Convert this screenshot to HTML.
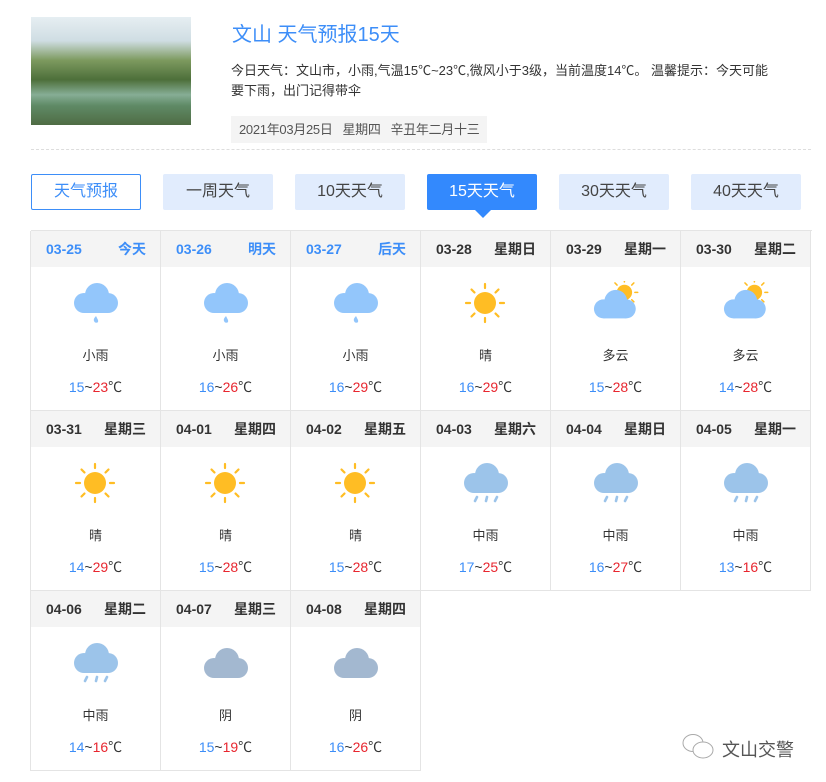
<!DOCTYPE html>
<html><head><meta charset="utf-8"><style>
*{margin:0;padding:0;box-sizing:border-box}
body{width:826px;height:782px;background:#fff;font-family:"Liberation Sans","Noto Sans CJK SC",sans-serif;color:#333;position:relative;overflow:hidden}
.abs{position:absolute}
.img{left:31px;top:17px;width:160px;height:108px;background:linear-gradient(180deg,#e6eef2 0%,#cfdde3 22%,#7d9a5f 40%,#4d6f3a 58%,#86ad95 72%,#5f8a66 82%,#4f6c44 100%)}
.title{left:232px;top:18px;font-size:20px;color:#3d8ef8}
.desc{left:231px;top:61px;width:590px;font-size:13px;line-height:20px;color:#333;white-space:nowrap}
.date{left:231px;top:116px;height:27px;background:#f4f4f4;font-size:13px;line-height:27px;padding:0 8px;color:#555;white-space:nowrap;letter-spacing:-0.3px}
.dash{left:31px;top:149px;width:780px;border-top:1px dashed #ddd}
.tab{top:174px;width:110px;height:36px;background:#e1ecfd;border-radius:2px;text-align:center;line-height:36px;font-size:16px;color:#444}
.tab.first{background:#fff;border:1px solid #3d8ef8;color:#3d8ef8;line-height:34px}
.tab.act{background:#3389fd;color:#fff}
.tri{left:475px;top:210px;width:0;height:0;border-left:8px solid transparent;border-right:8px solid transparent;border-top:8px solid #3389fd}
.row{display:flex}
.cell{width:130px;height:180px;border-right:1px solid #e4e4e4;border-bottom:1px solid #e4e4e4;flex:none}
.cell.l{border-left:1px solid #e4e4e4;width:131px;margin-left:-1px}
.cell .h{height:36px;background:#f4f4f4;font-size:14px;font-weight:bold;line-height:36px;padding:0 14px 0 15px;display:flex;justify-content:space-between;color:#333}
.cell .h.b{color:#3d8ef8}
.cell svg{display:block;margin:14px auto 0}
.w{text-align:center;font-size:13px;margin-top:18px}
.t{text-align:center;font-size:14px;margin-top:13px}
.lo{color:#3d8ef8}.hi{color:#e8262f}
.wm{left:722px;top:736px;font-size:18px;color:#555}
</style></head><body>
<div class="abs img"></div>
<div class="abs title">文山 天气预报15天</div>
<div class="abs desc">今日天气：文山市，小雨,气温15℃~23℃,微风小于3级，当前温度14℃。 温馨提示：今天可能<br>要下雨，出门记得带伞</div>
<div class="abs date">2021年03月25日&nbsp;&nbsp;&nbsp;星期四&nbsp;&nbsp;&nbsp;辛丑年二月十三</div>
<div class="abs dash"></div>
<div class="abs tab first" style="left:31px">天气预报</div>
<div class="abs tab" style="left:163px">一周天气</div>
<div class="abs tab" style="left:295px">10天天气</div>
<div class="abs tab act" style="left:427px">15天天气</div>
<div class="abs tab" style="left:559px">30天天气</div>
<div class="abs tab" style="left:691px">40天天气</div>
<div class="abs tri"></div>
<svg width="0" height="0" style="position:absolute"><defs>
<g id="cl"><circle cx="24" cy="14" r="12"/><circle cx="11" cy="22" r="10"/><circle cx="35" cy="22" r="10"/><rect x="11" y="18" width="24" height="14"/></g>
<g id="sun" fill="#ffbd24"><circle cx="22" cy="22" r="11"/><g stroke="#ffbd24" stroke-width="2.2" stroke-linecap="round"><line x1="22" y1="3" x2="22" y2="7"/><line x1="22" y1="37" x2="22" y2="41"/><line x1="3" y1="22" x2="7" y2="22"/><line x1="37" y1="22" x2="41" y2="22"/><line x1="8.5" y1="8.5" x2="11.5" y2="11.5"/><line x1="32.5" y1="32.5" x2="35.5" y2="35.5"/><line x1="35.5" y1="8.5" x2="32.5" y2="11.5"/><line x1="11.5" y1="32.5" x2="8.5" y2="35.5"/></g></g>
<g id="lr"><use href="#cl" fill="#93c6fb"/><path d="M23 35q-4 4-1 6.5q4 1 3-2.5q-1-2-2-4z" fill="#93c6fb"/></g>
<g id="mr"><use href="#cl" fill="#9cc4ea"/><g stroke="#9cc4ea" stroke-width="2.6" stroke-linecap="round"><line x1="14" y1="36" x2="12" y2="40"/><line x1="24" y1="36" x2="23" y2="40"/><line x1="34" y1="36" x2="32" y2="40"/></g></g>
<g id="pc"><g transform="translate(16,-4) scale(.7)"><use href="#sun"/></g><g transform="translate(0,7) scale(.95)"><use href="#cl" fill="#93c6fb"/></g></g>
</defs></svg>
<div class="abs" style="left:31px;top:230px;width:781px;border-top:1px solid #e4e4e4">
<div class="row">
<div class="cell l"><div class="h b"><span>03-25</span><span>今天</span></div><svg width="46" height="46" viewBox="0 0 46 46"><use href="#lr"/></svg><div class="w">小雨</div><div class="t"><span class="lo">15</span>~<span class="hi">23</span>℃</div></div>
<div class="cell"><div class="h b"><span>03-26</span><span>明天</span></div><svg width="46" height="46" viewBox="0 0 46 46"><use href="#lr"/></svg><div class="w">小雨</div><div class="t"><span class="lo">16</span>~<span class="hi">26</span>℃</div></div>
<div class="cell"><div class="h b"><span>03-27</span><span>后天</span></div><svg width="46" height="46" viewBox="0 0 46 46"><use href="#lr"/></svg><div class="w">小雨</div><div class="t"><span class="lo">16</span>~<span class="hi">29</span>℃</div></div>
<div class="cell"><div class="h"><span>03-28</span><span>星期日</span></div><svg width="46" height="46" viewBox="0 0 46 46"><use href="#sun"/></svg><div class="w">晴</div><div class="t"><span class="lo">16</span>~<span class="hi">29</span>℃</div></div>
<div class="cell"><div class="h"><span>03-29</span><span>星期一</span></div><svg width="46" height="46" viewBox="0 0 46 46"><use href="#pc"/></svg><div class="w">多云</div><div class="t"><span class="lo">15</span>~<span class="hi">28</span>℃</div></div>
<div class="cell"><div class="h"><span>03-30</span><span>星期二</span></div><svg width="46" height="46" viewBox="0 0 46 46"><use href="#pc"/></svg><div class="w">多云</div><div class="t"><span class="lo">14</span>~<span class="hi">28</span>℃</div></div>
</div>
<div class="row">
<div class="cell l"><div class="h"><span>03-31</span><span>星期三</span></div><svg width="46" height="46" viewBox="0 0 46 46"><use href="#sun"/></svg><div class="w">晴</div><div class="t"><span class="lo">14</span>~<span class="hi">29</span>℃</div></div>
<div class="cell"><div class="h"><span>04-01</span><span>星期四</span></div><svg width="46" height="46" viewBox="0 0 46 46"><use href="#sun"/></svg><div class="w">晴</div><div class="t"><span class="lo">15</span>~<span class="hi">28</span>℃</div></div>
<div class="cell"><div class="h"><span>04-02</span><span>星期五</span></div><svg width="46" height="46" viewBox="0 0 46 46"><use href="#sun"/></svg><div class="w">晴</div><div class="t"><span class="lo">15</span>~<span class="hi">28</span>℃</div></div>
<div class="cell"><div class="h"><span>04-03</span><span>星期六</span></div><svg width="46" height="46" viewBox="0 0 46 46"><use href="#mr"/></svg><div class="w">中雨</div><div class="t"><span class="lo">17</span>~<span class="hi">25</span>℃</div></div>
<div class="cell"><div class="h"><span>04-04</span><span>星期日</span></div><svg width="46" height="46" viewBox="0 0 46 46"><use href="#mr"/></svg><div class="w">中雨</div><div class="t"><span class="lo">16</span>~<span class="hi">27</span>℃</div></div>
<div class="cell"><div class="h"><span>04-05</span><span>星期一</span></div><svg width="46" height="46" viewBox="0 0 46 46"><use href="#mr"/></svg><div class="w">中雨</div><div class="t"><span class="lo">13</span>~<span class="hi">16</span>℃</div></div>
</div>
<div class="row">
<div class="cell l"><div class="h"><span>04-06</span><span>星期二</span></div><svg width="46" height="46" viewBox="0 0 46 46"><use href="#mr"/></svg><div class="w">中雨</div><div class="t"><span class="lo">14</span>~<span class="hi">16</span>℃</div></div>
<div class="cell"><div class="h"><span>04-07</span><span>星期三</span></div><svg width="46" height="46" viewBox="0 0 46 46"><g transform="translate(0,5)"><use href="#cl" fill="#a3b8d0"/></g></svg><div class="w">阴</div><div class="t"><span class="lo">15</span>~<span class="hi">19</span>℃</div></div>
<div class="cell"><div class="h"><span>04-08</span><span>星期四</span></div><svg width="46" height="46" viewBox="0 0 46 46"><g transform="translate(0,5)"><use href="#cl" fill="#a3b8d0"/></g></svg><div class="w">阴</div><div class="t"><span class="lo">16</span>~<span class="hi">26</span>℃</div></div>
</div>
</div>
<svg class="abs" style="left:681px;top:732px" width="36" height="30" viewBox="0 0 36 30"><g fill="none" stroke="#aaa" stroke-width="1"><ellipse cx="12" cy="11" rx="10" ry="8.5"/><ellipse cx="22" cy="18" rx="10" ry="8" fill="#fff"/></g></svg>
<div class="abs wm">文山交警</div>
</body></html>
